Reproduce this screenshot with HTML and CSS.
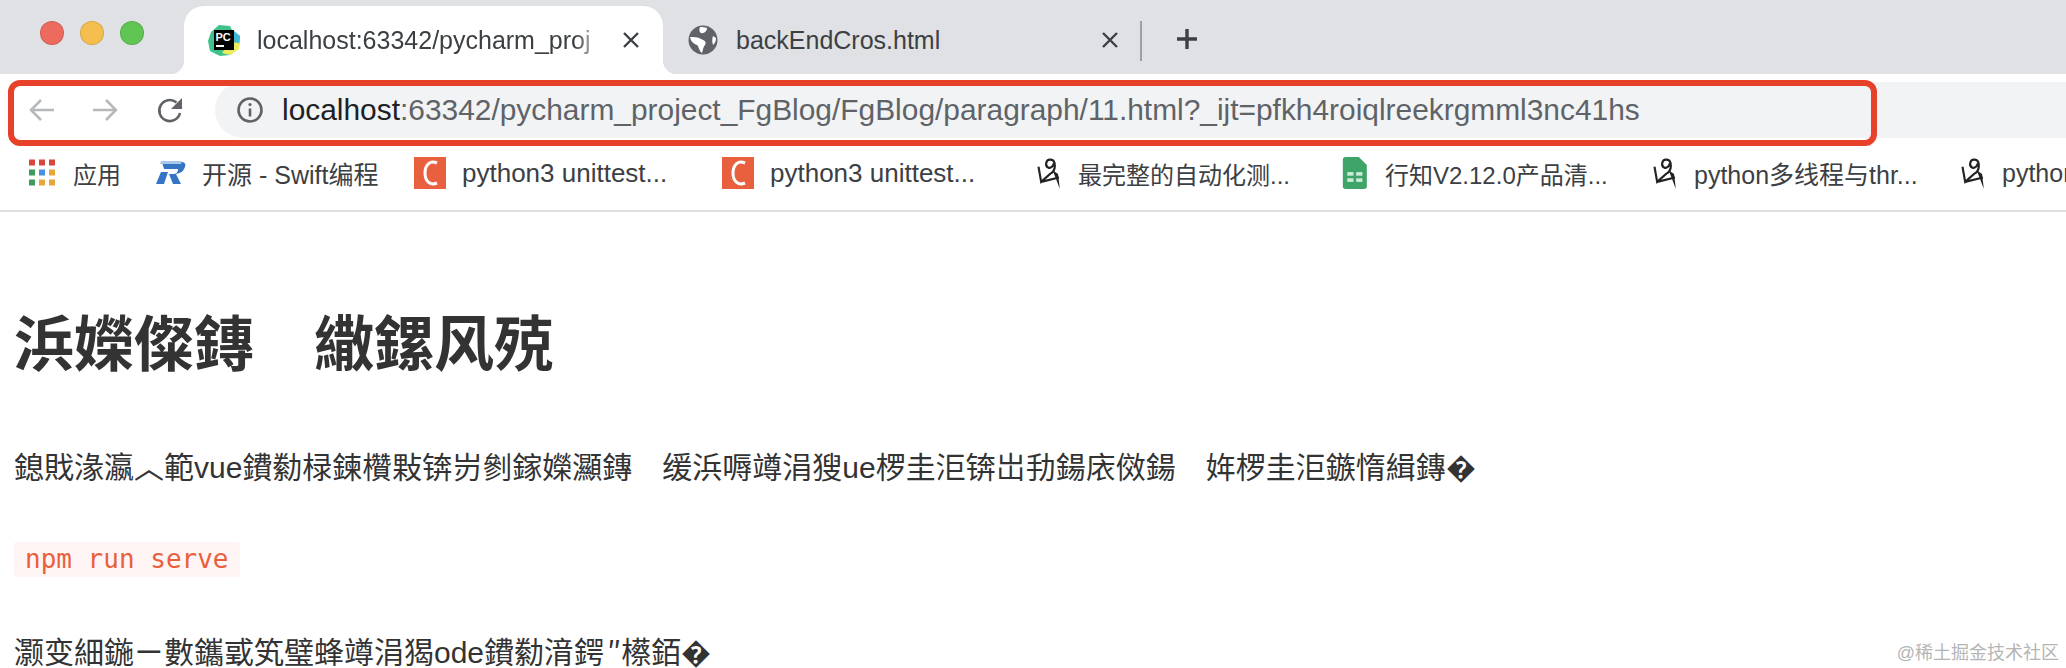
FILE: index.html
```html
<!DOCTYPE html>
<html lang="zh">
<head>
    <meta charset="UTF-8">
    <meta name="viewport" content="width=device-width, initial-scale=1.0">
    <title>localhost:63342/pycharm_project_FgBlog</title>
    <link rel="stylesheet" href="styles.css">
</head>
<body>
    <!-- Tab strip -->
    <div class="tabstrip">
        <div class="lights">
            <span class="light red"></span>
            <span class="light yellow"></span>
            <span class="light green"></span>
        </div>
        <div class="tab active">
            <svg class="favicon" viewBox="0 0 32 32">
                <polygon points="3,8 11,1 22,2 25,8 32,12 31,24 22,31 12,32 2,27 0,17" fill="#3fc28c"/>
                <polygon points="25,6 32,12 31,20 24,16" fill="#3fb8d8"/>
                <polygon points="22,18 31,19 31,25 22,31 14,29" fill="#ecec5c"/>
                <rect x="6" y="6" width="20" height="20" fill="#000"/>
                <text class="pc-text" x="7.5" y="16.5">PC</text>
                <rect x="8" y="21" width="8" height="2" fill="#fff"/>
            </svg>
            <span class="tab-title fade">localhost:63342/pycharm_proj</span>
            <svg class="close" viewBox="0 0 20 20"><path d="M3 3 L17 17 M17 3 L3 17"/></svg>
        </div>
        <div class="tab">
            <svg class="favicon globe" viewBox="0 0 30 30">
                <circle cx="15" cy="15" r="14.5" fill="#5f6368"/>
                <path d="M12 2 C14 2 17 2 19 3 C19 6 16 9 13 8 C11 7 11 4 12 2 Z" fill="#fff"/>
                <path d="M2 12 C6 12 10 12 13 14 C16 15 19 17 17 20 C15 22 15 25 14 28 C11 26 11 22 9 20 C6 19 3 17 2 12 Z" fill="#fff"/>
                <path d="M25 11 L28 13 C28 16 27 18 25 20 C24 17 24 14 25 11 Z" fill="#fff"/>
            </svg>
            <span class="tab-title">backEndCros.html</span>
            <svg class="close" viewBox="0 0 20 20"><path d="M3 3 L17 17 M17 3 L3 17"/></svg>
        </div>
        <span class="separator"></span>
        <svg class="plus" viewBox="0 0 24 24"><path d="M12 2 V22 M2 12 H22"/></svg>
    </div>

    <!-- Toolbar -->
    <div class="toolbar">
        <svg class="nav-icon disabled" viewBox="0 0 28 28"><path d="M26 14 H3 M13 4 L3 14 L13 24"/></svg>
        <svg class="nav-icon disabled" viewBox="0 0 28 28"><path d="M2 14 H25 M15 4 L25 14 L15 24"/></svg>
        <svg class="nav-icon reload" viewBox="0 0 28 28">
            <path d="M24 17 A10.5 10.5 0 1 1 20.5 6.5"/>
            <polygon class="solid" points="26,2 26,13 15,13"/>
        </svg>
        <div class="omnibox">
            <svg class="info" viewBox="0 0 28 28">
                <circle cx="14" cy="14" r="11.5"/>
                <path d="M14 12.5 V20.5"/>
                <circle class="solid" cx="14" cy="8.5" r="1.6"/>
            </svg>
            <span class="url"><span class="host">localhost</span>:63342/pycharm_project_FgBlog/FgBlog/paragraph/11.html?_ijt=pfkh4roiqlreekrgmml3nc41hs</span>
        </div>
    </div>

    <!-- Bookmarks -->
    <div class="bookmarks">
        <div class="bookmark tight">
            <svg class="bm-icon" viewBox="0 0 33 27">
                <rect x="0" y="0" width="6" height="6" fill="#d9463c"/><rect x="10" y="0" width="6" height="6" fill="#d9463c"/><rect x="20" y="0" width="6" height="6" fill="#d9463c"/>
                <rect x="0" y="10" width="6" height="6" fill="#3f9a5d"/><rect x="10" y="10" width="6" height="6" fill="#4a8fe0"/><rect x="20" y="10" width="6" height="6" fill="#e5a73a"/>
                <rect x="0" y="20" width="6" height="6" fill="#3f9a5d"/><rect x="10" y="20" width="6" height="6" fill="#e5a73a"/><rect x="20" y="20" width="6" height="6" fill="#e5a73a"/>
            </svg>
            <span>应用</span>
        </div>
        <div class="bookmark mid">
            <svg class="bm-icon" viewBox="0 0 33 26">
                <path d="M8 2 H28 C32 2 32 6 30 9 C29 12 26 13 22 14 L27 24 H19 L15 14 H20 C23 14 24 11 24 9 H10 Z" fill="#3476c4"/>
                <path d="M7 12 H14 L10 24 H2 Z" fill="#3476c4"/>
                <path d="M7 1 H28 L27 4 H6 Z" fill="#a9c9ea"/>
            </svg>
            <span>开源 - Swift编程</span>
        </div>
        <div class="bookmark wide">
            <svg class="bm-icon" viewBox="0 0 33 32"><rect width="32" height="32" fill="#e9603f"/><path class="csdn-c" d="M23 6 C16 3 11 8 11 16 C11 24 16 29 23 26"/></svg>
            <span>python3 unittest...</span>
        </div>
        <div class="bookmark wide">
            <svg class="bm-icon" viewBox="0 0 33 32"><rect width="32" height="32" fill="#e9603f"/><path class="csdn-c" d="M23 6 C16 3 11 8 11 16 C11 24 16 29 23 26"/></svg>
            <span>python3 unittest...</span>
        </div>
        <div class="bookmark tight">
            <svg class="bm-icon" viewBox="0 0 33 36"><path class="sketch" d="M3 11 L6 28 L16 19 C23 16 23 4 17 3 C11 2 10 10 14 12 C17 13 20 10 20 7 M6 28 L26 23"/><polygon points="19,15 25,19 27,36" fill="#222"/></svg>
            <span>最完整的自动化测...</span>
        </div>
        <div class="bookmark tight">
            <svg class="bm-icon" viewBox="0 0 33 36">
                <path d="M3 0 H18 L27 9 V33 Q27 36 24 36 H3 Q0 36 0 33 V3 Q0 0 3 0 Z" fill="#3fa468"/>
                <rect x="5" y="17" width="7" height="4" fill="#cdebd9"/><rect x="15" y="17" width="7" height="4" fill="#cdebd9"/>
                <rect x="5" y="24" width="7" height="4" fill="#cdebd9"/><rect x="15" y="24" width="7" height="4" fill="#cdebd9"/>
            </svg>
            <span>行知V2.12.0产品清...</span>
        </div>
        <div class="bookmark tight mid">
            <svg class="bm-icon" viewBox="0 0 33 36"><path class="sketch" d="M3 11 L6 28 L16 19 C23 16 23 4 17 3 C11 2 10 10 14 12 C17 13 20 10 20 7 M6 28 L26 23"/><polygon points="19,15 25,19 27,36" fill="#222"/></svg>
            <span>python多线程与thr...</span>
        </div>
        <div class="bookmark tight mid">
            <svg class="bm-icon" viewBox="0 0 33 36"><path class="sketch" d="M3 11 L6 28 L16 19 C23 16 23 4 17 3 C11 2 10 10 14 12 C17 13 20 10 20 7 M6 28 L26 23"/><polygon points="19,15 25,19 27,36" fill="#222"/></svg>
            <span>python</span>
        </div>
    </div>

    <!-- Annotation drawn over the toolbar -->
    <div class="highlight"></div>

    <!-- Page content -->
    <main class="content">
        <h1>浜嬫儏鏄　繖鏍风殑</h1>
        <p>鎴戝湪瀛︿範vue鐨勬椂鍊欑敤锛岃剼鎵嬫灦鏄　缓浜嗕竴涓獀ue椤圭洰锛岀劧鍚庡傚鍚　姩椤圭洰鏃惰緝鏄�</p>
        <code>npm run serve</code>
        <p class="last">灏变細鍦ㄧ數鑴戜笂璧蜂竴涓猲ode鐨勬湇鍔<span class="fullwidth">″</span>櫒銆�</p>
    </main>

    <div class="watermark">@稀土掘金技术社区</div>
</body>
</html>
```

FILE: styles.css
```css
* {
    box-sizing: border-box;
}
html, body {
    margin: 0;
    height: 668px;
    overflow: hidden;
    background: #fff;
}
body {
    position: relative;
    font-family: "Liberation Sans", "Noto Sans CJK SC", sans-serif;
    color: #333;
}

/* tab strip */
.tabstrip {
    display: flex;
    align-items: flex-end;
    height: 74px;
    background: #dfe1e5;
}
.lights {
    display: flex;
    gap: 16px;
    align-self: flex-start;
    margin: 21px 40px 0 40px;
}
.light {
    width: 24px;
    height: 24px;
    border-radius: 50%;
    border: 1px solid rgba(0,0,0,0.12);
}
.red { background: #ed6a5e; }
.yellow { background: #f5bf4f; }
.green { background: #61c554; }
.tab {
    display: flex;
    align-items: center;
    height: 68px;
    width: 479px;
    padding: 0 22px 0 25px;
    font-size: 25px;
    color: #3c4043;
}
.tab.active {
    position: relative;
    width: 479px;
    padding-left: 24px;
    background: #fff;
    border-radius: 20px 20px 0 0;
}
.tab.active::before,
.tab.active::after {
    content: "";
    position: absolute;
    bottom: 0;
    width: 14px;
    height: 14px;
}
.tab.active::before {
    left: -14px;
    background: radial-gradient(circle at 0 0, transparent 14px, #fff 14.5px);
}
.tab.active::after {
    right: -14px;
    background: radial-gradient(circle at 100% 0, transparent 14px, #fff 14.5px);
}
.favicon {
    flex: none;
    width: 32px;
    height: 32px;
    margin-right: 17px;
}
.favicon.globe {
    width: 30px;
    height: 30px;
    margin-right: 18px;
}
.pc-text {
    font-size: 11px;
    font-weight: bold;
    fill: #fff;
}
.tab-title {
    flex: 1;
    overflow: hidden;
    white-space: nowrap;
}
.tab-title.fade {
    -webkit-mask-image: linear-gradient(to right, #000 92%, transparent 100%);
    mask-image: linear-gradient(to right, #000 92%, transparent 100%);
}
.close {
    flex: none;
    width: 20px;
    height: 20px;
    margin-left: 18px;
    fill: none;
    stroke: #3c4043;
    stroke-width: 2.4;
}
.separator {
    width: 2px;
    height: 40px;
    margin: 0 0 13px -2px;
    background: #9aa0a6;
}
.plus {
    width: 24px;
    height: 24px;
    margin: 0 0 23px 33px;
    fill: none;
    stroke: #3c4043;
    stroke-width: 3.4;
}

/* toolbar */
.toolbar {
    display: flex;
    align-items: center;
    gap: 35px;
    height: 72px;
    padding: 0 0 0 28px;
}
.nav-icon {
    flex: none;
    width: 28px;
    height: 28px;
    fill: none;
    stroke: #5f6368;
    stroke-width: 2.6;
}
.nav-icon.disabled {
    stroke: #b6b9bc;
}
.nav-icon.reload {
    margin-left: 2px;
}
.solid {
    fill: #5f6368;
    stroke: none;
}
.omnibox {
    display: flex;
    flex: 1;
    align-items: center;
    gap: 18px;
    height: 56px;
    margin-left: -4px;
    padding-left: 21px;
    background: #f1f3f4;
    border-radius: 28px 0 0 28px;
    font-size: 29.9px;
    color: #5f6368;
    white-space: nowrap;
}
.info {
    flex: none;
    width: 28px;
    height: 28px;
    fill: none;
    stroke: #5f6368;
    stroke-width: 2.6;
}
.host {
    color: #202124;
}

/* bookmarks */
.bookmarks {
    display: grid;
    grid-template-columns: 125px 260px 308px 312px 307px 309px 308px 1fr;
    align-items: center;
    height: 66px;
    padding: 0 0 10px 29px;
    border-bottom: 2px solid #dedfe0;
    font-size: 24px;
    color: #3c4043;
    white-space: nowrap;
    overflow: hidden;
}
.bookmark {
    display: flex;
    align-items: center;
    gap: 15px;
}
.bookmark.tight {
    gap: 11px;
}
.bookmark.mid {
    font-size: 25px;
}
.bookmark.wide {
    font-size: 26px;
}
.bm-icon {
    flex: none;
    width: 33px;
    height: 32px;
}
.csdn-c {
    fill: none;
    stroke: #fff;
    stroke-width: 3;
}
.sketch {
    fill: none;
    stroke: #222;
    stroke-width: 2.4;
}

/* red annotation box */
.highlight {
    position: absolute;
    left: 8px;
    top: 80px;
    width: 1869px;
    height: 66px;
    border: 6px solid #e8412a;
    border-radius: 12px;
}

/* page content */
.content {
    padding: 92px 0 0 14px;
}
.content h1 {
    margin: 0;
    font-size: 60px;
    line-height: 84px;
}
.content p {
    margin: 56px 0 0;
    font-size: 30px;
    line-height: 48px;
}
.content p.last {
    margin-top: 57px;
    line-height: 32px;
}
.content code {
    display: inline-block;
    margin-top: 50px;
    padding: 0 11px;
    height: 35px;
    font-family: "DejaVu Sans Mono", monospace;
    font-size: 26px;
    line-height: 35px;
    color: #e8603c;
    background: #fff5f5;
    border-radius: 3px;
}
.fullwidth {
    margin-left: 3px;
    font-family: "Noto Sans CJK SC", sans-serif;
}
.watermark {
    position: absolute;
    right: 7px;
    bottom: 4px;
    font-size: 18px;
    color: #b5b5b5;
}
```
